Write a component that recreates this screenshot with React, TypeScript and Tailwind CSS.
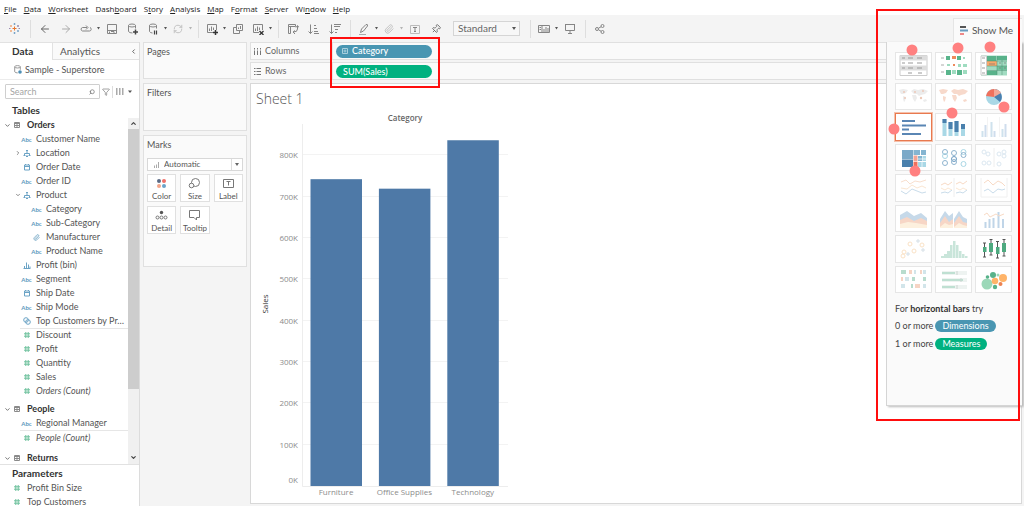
import React from 'react';
import { ArrowLeft, ArrowRight, ChevronDown, ChevronLeft, ChevronRight, ChevronUp, Filter, Paperclip, Pin, RefreshCw, Search } from 'lucide-react';

const menus = [
  ['', 'F', 'ile'],
  ['', 'D', 'ata'],
  ['', 'W', 'orksheet'],
  ['Dash', 'b', 'oard'],
  ['S', 't', 'ory'],
  ['', 'A', 'nalysis'],
  ['', 'M', 'ap'],
  ['F', 'o', 'rmat'],
  ['', 'S', 'erver'],
  ['Wi', 'n', 'dow'],
  ['', 'H', 'elp'],
];

type FieldKind = 'abc' | 'geo' | 'date' | 'clip' | 'bin' | 'set' | 'num';
type Field = { kind: FieldKind; name: string; level?: number; arrow?: 'open' | 'closed'; italic?: boolean };

const orderDims: Field[] = [
  { kind: 'abc', name: 'Customer Name' },
  { kind: 'geo', name: 'Location', arrow: 'closed' },
  { kind: 'date', name: 'Order Date' },
  { kind: 'abc', name: 'Order ID' },
  { kind: 'geo', name: 'Product', arrow: 'open' },
  { kind: 'abc', name: 'Category', level: 1 },
  { kind: 'abc', name: 'Sub-Category', level: 1 },
  { kind: 'clip', name: 'Manufacturer', level: 1 },
  { kind: 'abc', name: 'Product Name', level: 1 },
  { kind: 'bin', name: 'Profit (bin)' },
  { kind: 'abc', name: 'Segment' },
  { kind: 'date', name: 'Ship Date' },
  { kind: 'abc', name: 'Ship Mode' },
  { kind: 'set', name: 'Top Customers by Pr…' },
];

const orderMeasures: Field[] = [
  { kind: 'num', name: 'Discount' },
  { kind: 'num', name: 'Profit' },
  { kind: 'num', name: 'Quantity' },
  { kind: 'num', name: 'Sales' },
  { kind: 'num', name: 'Orders (Count)', italic: true },
];

const sales = [
  { name: 'Furniture', value: 742000 },
  { name: 'Office Supplies', value: 719047 },
  { name: 'Technology', value: 836154 },
];

function FieldIcon({ kind }: { kind: FieldKind }) {
  if (kind === 'abc') return <span className="text-[6px] font-bold text-[#5b98bd]">Abc</span>;
  if (kind === 'clip') return <Paperclip className="w-[7px] h-[7px] text-[#4e8fb5]" />;
  return (
    <svg width="8" height="8" viewBox="0 0 8 8" fill="none" stroke={kind === 'num' ? '#6cc09c' : '#6ba3c5'} strokeWidth="1">
      {kind === 'geo' && <path d="M4 3v2M1.5 6V4.5h5V6M3 1.5h2M3.500 2.500h1M.5 6.5h2M5.5 6.5h2M3.5 6.5h1M3 7.500h2" />}
      {kind === 'date' && <path d="M1.5 2h5v5h-5zM1.5 3.5h5M2.5 1v1M5.5 1v1" />}
      {kind === 'bin' && <path d="M.5 7.5h7M1.5 7V5M3.5 7V1.5M5.5 7V3.5M7 7V5.5" />}
      {kind === 'set' && <><circle cx="3" cy="3" r="2.3" /><circle cx="5" cy="5" r="2.3" /></>}
      {kind === 'num' && <path d="M2.8 1v6M5.2 1v6M1 2.8h6M1 5.2h6" />}
    </svg>
  );
}

function FieldRow({ field }: { field: Field }) {
  return (
    <li className={`flex items-center h-[14px] ${field.level ? 'pl-[25px]' : 'pl-[15px]'}`}>
      <span className="w-[6px] shrink-0 text-[#666]">
        {field.arrow === 'open' && <ChevronDown className="w-[6px] h-[6px]" strokeWidth={3} />}
        {field.arrow === 'closed' && <ChevronRight className="w-[6px] h-[6px]" strokeWidth={3} />}
      </span>
      <span className="w-[11px] shrink-0 flex items-center justify-center"><FieldIcon kind={field.kind} /></span>
      <button className={`ml-1 whitespace-nowrap ${field.italic ? 'italic' : ''}`}>{field.name}</button>
    </li>
  );
}

function TableHeading({ name }: { name: string }) {
  return (
    <h3 className="flex items-center h-[14px] pl-1 font-bold text-[#333]">
      <ChevronDown className="w-[7px] h-[7px] text-[#666]" strokeWidth={3} />
      <svg className="ml-[3px] mr-[7px]" width="6" height="6" viewBox="0 0 6 6" fill="none" stroke="#8a8a8a">
        <path d="M.5 .5h5v5h-5zM0 1.5h6M0 3.5h6M3 1v5" />
      </svg>
      {name}
    </h3>
  );
}

function Sidebar() {
  return (
    <aside className="w-[140px] shrink-0 flex flex-col bg-white border-r border-[#dcdcdc] overflow-hidden text-[9px] text-[#555]">
      <div className="flex h-[18px] text-[10px] shrink-0">
        <button className="w-[52px] border-t border-[#e2e2e2] pl-3 pr-5 text-left font-bold text-[#333]">Data</button>
        <div className="flex-1 flex items-center justify-between bg-[#fafafa] border border-r-0 border-[#e2e2e2] pl-[7px] pr-[2px] text-[#555]">
          <button>Analytics</button>
          <button aria-label="Collapse pane"><ChevronLeft className="w-[7px] h-[7px]" strokeWidth={3} /></button>
        </div>
      </div>
      <div className="flex items-center h-5 shrink-0 pl-[14px] gap-[3px] border-b border-[#ececec]">
        <svg width="8" height="9" viewBox="0 0 8 9" fill="none" stroke="#999">
          <ellipse cx="3.5" cy="1.8" rx="2.8" ry="1.2" /><path d="M.7 1.8v5q1 1.2 3 1.1M6.3 1.8v3" />
          <circle cx="6" cy="7" r="1.8" fill="#4e8fb5" stroke="none" />
        </svg>
        Sample - Superstore
      </div>
      <div className="flex items-center shrink-0 h-[23px] pl-[5px]">
        <div className="flex items-center w-[95px] h-[15px] border border-[#cfcfcf] rounded-[1px] px-1">
          <input aria-label="Search" placeholder="Search" className="min-w-0 flex-1 outline-none placeholder:text-[#a5a5a5]" />
          <Search className="w-[6px] h-[6px] -scale-x-100 text-[#777]" strokeWidth={3} />
        </div>
        <Filter className="w-[8px] h-[8px] ml-[2px] text-[#777]" />
        <span className="w-px h-3 ml-[2px] bg-[#ddd]" />
        <svg className="ml-[3px]" width="8" height="7" viewBox="0 0 8 7" fill="#aaa"><path d="M0 0h1.5v7H0zM3 0h1.5v7H3zM6 0h1.5v7H6z" /></svg>
        <svg className="ml-1" width="4" height="3" viewBox="0 0 4 3" fill="#555"><path d="M0 .5h4L2 3z" /></svg>
      </div>
      <h2 className="h-[15px] shrink-0 pl-3 text-[10px] leading-[15px] font-bold text-[#333]">Tables</h2>
      <div className="flex flex-1 min-h-0">
        <div className="flex-1 overflow-hidden">
          <TableHeading name="Orders" />
          <ul>{orderDims.map((f) => <FieldRow key={f.name} field={f} />)}</ul>
          <ul className="relative before:absolute before:left-5 before:right-0 before:top-0 before:h-px before:bg-[#e6e6e6]">
            {orderMeasures.map((f) => <FieldRow key={f.name} field={f} />)}
          </ul>
          <div className="mt-1"><TableHeading name="People" /></div>
          <ul><FieldRow field={{ kind: 'abc', name: 'Regional Manager' }} /></ul>
          <div className="ml-5 border-t border-[#e6e6e6]" />
          <ul><FieldRow field={{ kind: 'num', name: 'People (Count)', italic: true }} /></ul>
          <div className="mt-[6px]"><TableHeading name="Returns" /></div>
        </div>
        <div className="w-[11px] flex flex-col bg-[#f0f0f0] text-[#444]">
          <button aria-label="Scroll up" className="h-[11px] flex items-center justify-center"><ChevronUp className="w-[7px] h-[7px]" strokeWidth={4} /></button>
          <div className="h-3/4 bg-[#cdcdcd]" />
          <button aria-label="Scroll down" className="mt-auto h-[13px] flex items-center justify-center"><ChevronDown className="w-[7px] h-[7px]" strokeWidth={4} /></button>
        </div>
      </div>
      <div className="h-[42px] shrink-0 border-t border-[#e2e2e2]">
        <h2 className="h-4 pl-3 text-[10px] leading-4 font-bold text-[#333]">Parameters</h2>
        {['Profit Bin Size', 'Top Customers'].map((p) => (
          <div key={p} className="flex items-center h-[14px] pl-[13px] gap-[6px]">
            <FieldIcon kind="num" />
            <button>{p}</button>
          </div>
        ))}
      </div>
    </aside>
  );
}

function Tool({ label, caret, dim, children }: { label: string; caret?: boolean; dim?: boolean; children: React.ReactNode }) {
  return (
    <div className={`flex items-center ${dim ? 'opacity-40' : ''}`}>
      <button aria-label={label} className={`flex items-center justify-center h-5 ${caret ? 'w-5' : 'w-[21px]'}`}>{children}</button>
      {caret && (
        <svg width="5" height="3" viewBox="0 0 5 3" fill="#555"><path d="M1 0h3L2.5 2.5z" /></svg>
      )}
    </div>
  );
}

function Glyph({ children }: { children: React.ReactNode }) {
  return <svg width="12" height="12" viewBox="0 0 12 12" fill="none" stroke="#858585">{children}</svg>;
}

const Divider = () => <span className="w-px h-[18px] ml-[5px] mr-[3px] bg-[#dedede]" />;

function Toolbar() {
  return (
    <div className="flex items-center h-[27px] shrink-0 pl-1 text-[#666]">
      <Tool label="Start page">
        <svg width="11" height="11" viewBox="0 0 11 11" fill="none">
          <path stroke="#e8762d" d="M5.5 3.5v4M3.5 5.5h4" />
          <path stroke="#7ba5c8" d="M5.5 0v2M4.5 1h2M5.5 9v2M4.5 10h2M8 8h2M9 7v2" />
          <path stroke="#f0a878" d="M1 3h2M2 2v2M1 8h2M2 7v2" />
          <path stroke="#9a8ab0" d="M8 3h2M9 2v2M0 5.5h1.5M9.5 5.5H11" />
        </svg>
      </Tool>
      <Divider />
      <Tool label="Undo"><ArrowLeft className="w-3 h-3" strokeWidth={2} /></Tool>
      <Tool label="Redo"><ArrowRight className="w-3 h-3 text-[#aaa]" strokeWidth={2} /></Tool>
      <Tool label="Replay" caret><Glyph><path d="M7 4.5H2.5a1.8 1.8 0 0 0 0 3.5h7a1.8 1.8 0 0 0 .5-3.5M6 2.5l2 2-2 2" /></Glyph></Tool>
      <Tool label="Save"><Glyph><path d="M1.5 1.5h9v9h-9zM3.5 8.5v2M5 8.500h3v2M2 7.5h8" /></Glyph></Tool>
      <Tool label="New data source"><Glyph><ellipse cx="5" cy="2.5" rx="3.5" ry="1.5" /><path d="M1.500 2.500v6q1 1.500 4 1.500M8.500 2.500v3" /><path stroke="#444" strokeWidth="1.500" d="M8.500 6.500v5M6 9h5" /></Glyph></Tool>
      <Tool label="Pause updates" caret><Glyph><ellipse cx="6" cy="2.5" rx="3.500" ry="1.500" /><path d="M2.500 2.500v6q1 1.500 3 1.500M9.500 2.500v3" /><path stroke="#444" strokeWidth="1.200" d="M7.500 7.500v4M9.500 7.500v4" /></Glyph></Tool>
      <Tool label="Refresh" caret dim><RefreshCw className="w-[10px] h-[10px]" /></Tool>
      <Divider />
      <Tool label="New worksheet" caret><Glyph><path d="M7 9.500H1.500v-8h9V7M3.500 8V5.500M5.500 8V3.500M7.500 7V4.500" /><path stroke="#333" strokeWidth="1.500" d="M9.500 7v5M7 9.500h5" /></Glyph></Tool>
      <Tool label="Duplicate"><Glyph><path d="M4.500 1.500h6v6h-6zM4.500 4.500h-3v6h6v-3M6.500 6V4.500M8.500 6V3" /></Glyph></Tool>
      <Tool label="Clear sheet" caret><Glyph><path d="M7 9.500H1.500v-8h9V7M3.500 8V5.500M5.500 8V3.500M7.500 7V4.500" /><path stroke="#333" strokeWidth="1.300" d="M7.500 8l4 4M11.500 8l-4 4" /></Glyph></Tool>
      <Divider />
      <Tool label="Swap rows and columns"><Glyph><path d="M1.500 1.500h7v2h-7zM1.500 3.500h2v7h-2zM10.500 3v3q0 3-4 3M9 4.500l1.500-2L12 4.500M8 7.500L6 9l2 2" /></Glyph></Tool>
      <Tool label="Sort ascending"><Glyph><path d="M2.500 1.500v9M.5 8.500l2 2 2-2M6 2.500h2M6 5.500h3M6 8.500h4M6 10.500h5" /></Glyph></Tool>
      <Tool label="Sort descending"><Glyph><path d="M2.500 1.500v9M.5 8.500l2 2 2-2M5 1.500h7M5 3.500h6M6 6.500h3M6 9.500h2" /></Glyph></Tool>
      <Divider />
      <Tool label="Highlight" caret><Glyph><path d="M1 11.500h7" stroke="#aaa" /><path d="M2.500 9.500l1-3.500 4.500-4.500q2-.5 1.500 1.500L5.500 8z" /></Glyph></Tool>
      <Tool label="Group members" caret dim><Paperclip className="w-[10px] h-[10px]" /></Tool>
      <Tool label="Show mark labels"><Glyph><path stroke="#bbb" d="M1.500 2.500h9v8h-9z" /><path d="M4 4.500h4M6 4.500v4M5 8.500h2" /></Glyph></Tool>
      <Tool label="Fix axes"><Pin className="w-[10px] h-[10px] rotate-45" /></Tool>
      <div className="relative ml-[7px] w-[67px] h-[15px] shrink-0">
        <select aria-label="Fit" className="block appearance-none w-full h-full border border-[#d5d5d5] bg-[#f7f7f7] pl-1 text-[10px] leading-[13px] text-[#666]">
          <option>Standard</option>
        </select>
        <svg className="absolute right-1 top-1.5 pointer-events-none" width="4" height="3" viewBox="0 0 4 3" fill="#555"><path d="M0 0h4L2 3z" /></svg>
      </div>
      <span className="w-[5px]" />
      <Divider />
      <Tool label="Show cards" caret><Glyph><path d="M.5 2.500h11v7H.5zM4 2.500v7M1.500 4.500h1.500M1.500 6.500h1.500M6 9V6M8 9V4M10 9V5" /></Glyph></Tool>
      <Tool label="Presentation mode"><Glyph><path d="M1 1.500h10M1.500 2v5.500h9V2M6 7.500v2.500M4 10.500h4" /></Glyph></Tool>
      <Divider />
      <Tool label="Share"><Glyph><circle cx="3" cy="6" r="1.500" /><circle cx="8.500" cy="3" r="1.500" /><circle cx="8.500" cy="9" r="1.500" /><path d="M4.500 5.200L7 3.800M4.500 6.800L7 8.200" /></Glyph></Tool>
    </div>
  );
}

const marks = [
  { name: 'Color', icon: <><circle cx="4" cy="4" r="2" fill="#5b6b86" /><circle cx="9" cy="4" r="2" fill="#f07068" /><circle cx="4" cy="9" r="2" fill="#f4a58a" /><circle cx="9" cy="9" r="2" fill="#6ba3c8" /></> },
  { name: 'Size', icon: <g fill="none" stroke="#777"><circle cx="7.500" cy="5.500" r="4" /><circle cx="3.500" cy="8.500" r="2.300" fill="#fafafa" /></g> },
  { name: 'Label', icon: <path fill="none" stroke="#777" d="M1.500 2.500h10v8h-10zM4.500 4.500h4M6.500 4.500v4" /> },
  { name: 'Detail', icon: <><circle cx="6.500" cy="3.500" r="1.700" fill="#555" /><g fill="none" stroke="#777"><circle cx="2.500" cy="8.500" r="1.500" /><circle cx="6.500" cy="8.500" r="1.500" /><circle cx="10.500" cy="8.500" r="1.500" /></g></> },
  { name: 'Tooltip', icon: <path fill="none" stroke="#777" d="M1.500 1.500h10v7h-3v2.500l-2.500-2.500h-4.500z" /> },
];

function Cards() {
  return (
    <div className="w-[110px] shrink-0 flex flex-col gap-1 pl-[3px] pr-[3px] text-[9px] text-[#555]">
      <section className="h-[37px] shrink-0 border border-[#e0e0e0] bg-[#fafafa] px-[3px] pt-[3px]"><h2 className="leading-3">Pages</h2></section>
      <section className="h-12 shrink-0 border border-[#e0e0e0] bg-[#fafafa] px-[3px] pt-[3px]"><h2 className="leading-3">Filters</h2></section>
      <section className="h-[132px] shrink-0 border border-[#e0e0e0] bg-[#fafafa] px-[3px] pt-[3px]">
        <h2 className="leading-3">Marks</h2>
        <div className="relative mt-[7px] h-[13px]">
          <select aria-label="Mark type" className="block appearance-none w-full h-full border border-[#d8d8d8] bg-white pl-4 text-[8px] leading-[11px]">
            <option>Automatic</option>
          </select>
          <svg className="absolute left-[7px] top-1 pointer-events-none" width="6" height="6" viewBox="0 0 6 6" stroke="#aaa"><path d="M.5 6V3.500M2.500 6V2.500M4.500 6V0" /></svg>
          <span className="absolute right-[11px] top-px bottom-px w-px bg-[#ddd]" />
          <svg className="absolute right-1 top-[5px] pointer-events-none" width="4" height="3" viewBox="0 0 4 3" fill="#666"><path d="M0 0h4L2 3z" /></svg>
        </div>
        <div className="grid grid-cols-3 gap-1 mt-[3px]">
          {marks.map((m) => (
            <button key={m.name} className="h-7 flex flex-col items-center justify-between border border-[#e0e0e0] bg-white pt-[2px] text-[8px] leading-[10px]">
              <svg width="13" height="13" viewBox="0 0 13 13">{m.icon}</svg>
              {m.name}
            </button>
          ))}
        </div>
      </section>
    </div>
  );
}

function Shelf({ name, rows, children }: { name: string; rows?: boolean; children: React.ReactNode }) {
  return (
    <div className="flex items-center h-[18px] border border-[#e0e0e0] bg-[#fafafa]">
      <div className="flex items-center gap-1 w-[81px] pl-[3px] text-[9px] text-[#666]">
        <svg width="7" height="7" viewBox="0 0 7 7" stroke="#777">
          {rows ? <path d="M0 .5h1.500M2.500 .5H7M0 3.500h1.500M2.500 3.500H7M0 6.500h1.500M2.500 6.500H7" /> : <path d="M.5 0v1.500M.5 2.500V7M3.500 0v1.500M3.500 2.500V7M6.500 0v1.500M6.500 2.500V7" />}
        </svg>
        {name}
      </div>
      <div className="flex-1 h-full flex items-center border-l border-[#e6e6e6] pl-[3px]">{children}</div>
    </div>
  );
}

function Chart() {
  const zero = 378;
  const y = (v: number) => zero - v * 0.0004135;
  const ticks = [0, 1, 2, 3, 4, 5, 6, 7, 8];
  return (
    <svg width="270" height="394" viewBox="0 0 270 394" className="block" role="img" aria-label="Sales by category" fontFamily='"Open Sans", sans-serif' fontSize="8" fill="#8c8c8c">
      <text x="154" y="13" textAnchor="middle" fontWeight="600" fill="#666">Category</text>
      <text transform="translate(17 196) rotate(-90)" textAnchor="middle" fill="#333">Sales</text>
      <path d="M51.500 16V378.500H257" fill="none" stroke="#ededed" />
      {ticks.map((t) => (
        <g key={t}>
          {t > 0 && <line x1="52" x2="257" y1={Math.round(y(t * 100000)) - 0.5} y2={Math.round(y(t * 100000)) - 0.5} stroke="#f3f3f3" />}
          <text x="47" y={t ? y(t * 100000) + 3 : zero - 3} textAnchor="end">{t ? `${t}00K` : '0K'}</text>
        </g>
      ))}
      {sales.map((s, i) => (
        <g key={s.name}>
          <rect x={59.5 + i * 68.4} y={y(s.value)} width="51.500" height={zero - y(s.value)} fill="#4e79a7" />
          <text x={85 + i * 68.4} y="387" textAnchor="middle">{s.name}</text>
        </g>
      ))}
    </svg>
  );
}

const worldMap = 'M4 7l4-1 5 1-2 3-3 1-2 0zM8 13l3 1-1 4-1 1-1-3zM16 8l3-2 4 1 5-1 5 2-3 3-4 1-2 1-2-2-3 0zM17 12l4 0 1 3-2 4-2-3zM28 17l3-1 1 2-3 1z';

// 3 columns by 8 rows, each drawn on a 37x27 tile
const thumbs: { name: string; art: React.ReactNode }[] = [
  { name: 'Text table', art: <><path d="M5 3.500h27v20H5z" fill="#fff" stroke="#ccc" /><path d="M5 3.500h27v5H5zM5 13.500h27v5H5z" fill="#ddd" /><path d="M7 6h3M13 6h5M22 6h5M7 11h3M13 11h5M22 11h5M7 16h3M13 16h5M22 16h5M13 21h4M23 21h4" stroke="#999" /></> },
  { name: 'Heat map', art: <><path d="M6 6h3M6 13h3M6 20h3" stroke="#aaa" /><path fill="#59b58c" d="M11 4h4v4h-4zM22 4h4v4h-4zM11 18h5v5h-5zM22 18h5v5h-5z" /><path fill="#9fdcc0" d="M17 18h4v4h-4zM28 5h2v2h-2zM12 12h3v2h-3zM23 12h3v3h-3zM28 12h4v3h-4zM28 18h4v4h-4z" /><path fill="#ee8a5c" d="M17 4h4v3h-4zM18 12h2v2h-2z" /></> },
  { name: 'Highlight table', art: <><path d="M6 3.500h26v20H6z" fill="#a2dcc2" /><path d="M12 4h9v5h-9zM22 4h10v4H22zM12 19h10v4H12z" fill="#58b28a" /><path d="M22 14h10v4H22z" fill="#70c39e" /><path d="M12 9h10v5H12z" fill="#f9a86a" /><path d="M6 4h5.500v19H6z" fill="#fff" stroke="#ccc" /><path d="M12 9h20M12 14h20M12 18.500h20M22 4v19M27 8v15" stroke="#4c8f73" strokeWidth=".5" /><path d="M7 6h3M7 11h3M7 16h3M7 21h3M14 12h6M24 11h2M29 11h2M24 16h2M29 16h2" stroke="#777" strokeWidth=".7" /></> },
  { name: 'Symbol map', art: <><path d={worldMap} fill="#ececec" /><g fill="#edc9b8"><circle cx="9" cy="9" r="1" /><circle cx="10" cy="15" r="1" /><circle cx="20" cy="9" r="1" /><circle cx="26" cy="15" r="1.200" /><circle cx="28" cy="8" r="1" /></g></> },
  { name: 'Filled map', art: <path d={worldMap} fill="#f7d9cb" /> },
  { name: 'Pie chart', art: <><circle cx="19" cy="14" r="8" fill="#a9d8e6" /><path d="M19 14V6a8 8 0 0 1 6 13z" fill="#4a80b0" /><path d="M19 14l-8-1a8 8 0 0 1 8-7z" fill="#f0705c" /><path d="M19 14V6a8 8 0 0 1 7 4z" fill="#f3a797" /></> },
  { name: 'Horizontal bars', art: <path d="M7 8h13M7 12.500h24M7 16.500h7M7 21h19" stroke="#5a86b4" strokeWidth="2.200" /> },
  { name: 'Stacked bars', art: <><path d="M9.500 6v17M15.500 9v14M21.500 8v15M28 11v12" stroke="#a9d8e6" strokeWidth="4" /><path d="M9.500 6v4M15.500 9v7M21.500 8v11M28 11v5" stroke="#4a80ad" strokeWidth="4" /></> },
  { name: 'Side-by-side bars', art: <><path d="M12.500 4v20M24.500 4v20" stroke="#eee" strokeWidth=".7" /><path d="M7.500 24v-6M16.500 24V9M27.500 24V16" stroke="#cfe2ed" strokeWidth="2" /><path d="M10.500 24V12M19.500 24v-6M30.500 24V11" stroke="#cfdded" strokeWidth="2" /></> },
  { name: 'Treemap', art: <><path d="M7 6h11v9H7z" fill="#7ba9c8" /><path d="M7 15.500h11V23H7z" fill="#4a80ad" /><path d="M18.500 6H25v5h-6.500zM26 6h5v5h-5zM23 12h4v5h-4z" fill="#85b5d1" /><path d="M18.500 11.500h4v6h-4z" fill="#f4a595" /><path d="M18.500 18h4v5h-4z" fill="#f0705c" /><path d="M27.500 12H31v5h-3.500zM23 18h8v5h-8z" fill="#a9d8e6" /><path d="M27 17.500v6M23 15h8" stroke="#fff" strokeWidth=".7" /></> },
  { name: 'Circle views', art: <g fill="none" stroke="#8fb4cf"><circle cx="10" cy="8" r="2.500" /><circle cx="10" cy="12" r="2.500" stroke="#aad7e5" /><circle cx="10" cy="19" r="2.500" /><circle cx="19" cy="9" r="2.500" /><circle cx="19" cy="15" r="2.500" stroke="#6c9bc2" /><circle cx="19" cy="18" r="2.500" /><circle cx="28.500" cy="8" r="2.500" stroke="#aad7e5" /><circle cx="28.500" cy="11" r="2.500" /><circle cx="28.500" cy="20" r="2.500" stroke="#aad7e5" /></g> },
  { name: 'Side-by-side circles', art: <g fill="none" stroke="#dce8f1"><path d="M19 4v19" stroke="#eee" /><circle cx="9" cy="8" r="2" /><circle cx="13" cy="10" r="2" /><circle cx="9" cy="19" r="2" /><circle cx="14" cy="19" r="2" /><circle cx="24" cy="10" r="2" /><circle cx="29" cy="8" r="2" /><circle cx="29" cy="12" r="2" /><circle cx="24" cy="20" r="2" /></g> },
  { name: 'Continuous lines', art: <g fill="none"><path d="M6 8l5-2 4 4 5-3 5 1 6-2" stroke="#f8dfce" /><path d="M6 14l6 1 5-4 5 3 5-2 4 2" stroke="#fae6d2" /><path d="M6 17l5 3 6-5 5 2 5 2 4-1" stroke="#c9dcea" /></g> },
  { name: 'Discrete lines', art: <g fill="none"><path d="M19 4v19" stroke="#eee" /><path d="M6 11l4-2 3 2 4-3M21 10l4-2 3 2 4-3" stroke="#f8dac5" /><path d="M6 14l4 2 3-2 4 2M21 14l4 2 3-2 4 2" stroke="#fbe7d3" /><path d="M6 19l4-1 3 1 4-3M21 19l4-1 3 1 4-3" stroke="#c9dcea" /></g> },
  { name: 'Dual lines', art: <g fill="none"><path d="M6 4v19h26V4" stroke="#f0f0f0" /><path d="M9 9l4-3 5 5 5-4 4 2 3 3" stroke="#f8dac5" /><path d="M9 17l4-2 5 4 5-4 4 1 3-1" stroke="#c9dcea" /></g> },
  { name: 'Area charts (continuous)', art: <><path d="M5 10l7-4 7 5 7-3 6 5v10H5z" fill="#c6d9e9" /><path d="M5 15l7-3 7 4 7-3 6 3v7H5z" fill="#f7d6c6" /><path d="M5 19l8-2 8 1 11 2v3H5z" fill="#fdf0de" /></> },
  { name: 'Area charts (discrete)', art: <><path d="M5 14l5-8 4 5 4-3v15H5zM19 14l5-8 4 6 4 2v9H19z" fill="#c6d9e9" /><path d="M5 18l5-7 4 6 4-3v9H5zM19 18l5-7 4 6 4 1v5H19z" fill="#f7d6c6" /><path d="M5 22l5-4 4 2 4-1v4H5zM19 22l5-4 4 2 4 1v2H19z" fill="#fdf0de" /></> },
  { name: 'Dual combination', art: <><path d="M10.500 23v-6M14.500 23v-9M18.500 23V13M23.500 23V7M28 23v-9" stroke="#c0d5e8" strokeWidth="2" /><path d="M9 10l3-2 3 4 6-3 3 2 5-2" fill="none" stroke="#f8dac5" /></> },
  { name: 'Scatter plots', art: <g fill="none" stroke="#fae2c6"><circle cx="15" cy="9" r="2" /><circle cx="9" cy="17" r="2" /><circle cx="8" cy="21" r="2" /><circle cx="19" cy="16" r="2" /><circle cx="27" cy="10" r="2" /><path d="M23 4v4M21 6h4M13 17v4M11 19h4M28 13v4M26 15h4" stroke="#d5dfe6" /></g> },
  { name: 'Histogram', art: <path d="M6 23v-2h3v2zM9 23v-4h3v4zM12 23v-7h3v7zM15 23V10h2.500v13zM18 23V6h2.500v17zM21 23V10h2.500v13zM24 23v-7h2.500v7zM27 23v-4h2.500v4zM30 23v-2h2.500v2z" fill="#c9e5da" /> },
  { name: 'Box-and-whisker plot', art: <><path d="M9.500 8v14M16 4v16M22.500 6v17M29 4v17M8 8h3M8 22h3M14.500 4.500h3M14.500 20h3M21 6.500h3M21 23h3M27.500 4.500h3M27.500 21h3" stroke="#555" /><path d="M8 12h3.500v5H8zM14 8h4v9h-4zM21 12h3.500v7H21zM27 8h4v9h-4z" fill="#4eaa80" /></> },
  { name: 'Gantt chart', art: <><path d="M6 6h5M17 13h3M28 13h3M16 20h2" stroke="#b8dccd" strokeWidth="4" /><path d="M14 6h3M25 6h2M6 13h2M20 20h5" stroke="#f6d4c4" strokeWidth="4" /><path d="M19 6h2M28 6h3M10 13h4M6 20h4M28 20h3" stroke="#d2e5ea" strokeWidth="4" /></> },
  { name: 'Bullet graph', art: <><path d="M7 7h25M7 14h25M7 21h25" stroke="#eef3f1" strokeWidth="4" /><path d="M7 7h13M7 14h21M7 21h13" stroke="#bfe0d2" strokeWidth="2" /><path d="M22 5v4M26 12v4M22 19v4" stroke="#ccd5d1" /></> },
  { name: 'Packed bubbles', art: <><circle cx="12" cy="18" r="5.500" fill="#9bd8b8" /><circle cx="18" cy="9" r="3" fill="#58b28a" /><circle cx="12.500" cy="11" r="1.800" fill="#58b28a" /><circle cx="28" cy="12" r="4" fill="#ffb469" /><circle cx="20" cy="15" r="3.300" fill="#ffb469" /><circle cx="25.500" cy="18" r="2" fill="#ed8352" /><circle cx="20" cy="21" r="2.200" fill="#58b28a" /><circle cx="23" cy="9" r="1.500" fill="#9bd8b8" /></> },
];

const dots = [[26, 32], [72, 30], [104, 29], [118, 89], [66, 95], [8, 111], [29, 153]];

function ShowMe() {
  return (
    <div className="absolute right-[2px] top-[18px] w-[136px] text-[9px] text-[#444]">
      <button className="relative z-10 ml-auto flex items-center gap-1 h-6 w-[69px] pl-[6px] bg-[#fafafa] border-l border-t border-[#e5e5e5] text-[10px] text-[#555] whitespace-nowrap">
        <svg width="8" height="9" viewBox="0 0 8 9"><path d="M0 1h6" stroke="#555" strokeWidth="2" /><path d="M0 4.500h8" stroke="#6b9dc0" strokeWidth="2" /><path d="M0 8h4" stroke="#e88" strokeWidth="2" /></svg>
        Show Me
      </button>
      <div className="h-[364px] bg-[#fafafa] border-l border-b border-[#d5d5d5] shadow-[2px_1px_2px_#bbb] pl-2 pt-[10px]">
        <div className="grid grid-cols-3 gap-[3px] w-[117px] h-[241px]">
          {thumbs.map((t) => (
            <button key={t.name} aria-label={t.name} className={`bg-white border overflow-hidden flex items-center justify-center ${t.name === 'Horizontal bars' ? 'border-[#e8794f] outline outline-[#f5c0aa]' : 'border-[#e6e6e6]'}`}>
              <svg width="37" height="27" viewBox="0 0 37 27" className="shrink-0">{t.art}</svg>
            </button>
          ))}
        </div>
        <p className="mt-[10px] leading-3">For <b className="text-[#333]">horizontal bars</b> try</p>
        <p className="flex items-center gap-[2px] mt-1 h-[13px]">0 or more <span className="h-3 rounded-full bg-[#4996b2] px-[7px] leading-3 text-white">Dimensions</span></p>
        <p className="flex items-center gap-[2px] mt-[5px] h-[13px]">1 or more <span className="h-3 rounded-full bg-[#00b180] px-[7px] leading-3 text-white">Measures</span></p>
      </div>
      <svg className="absolute inset-0 z-10 pointer-events-none overflow-visible" width="136" height="388" fill="#ff8080">
        {dots.map(([cx, cy]) => <circle key={`${cx}-${cy}`} cx={cx} cy={cy} r="5.500" />)}
      </svg>
      <div className="absolute z-20 -left-[10px] -top-[9px] right-[2px] -bottom-[15px] border-2 border-[#ff0d0d] pointer-events-none" />
    </div>
  );
}

export default function App() {
  return (
    <div className="relative h-screen flex flex-col overflow-hidden bg-[#f4f4f4] font-['Lato',sans-serif]">
      <nav className="flex items-center gap-[7px] h-[15px] shrink-0 bg-white pl-1 pt-[3px] text-[8px] text-[#222] font-['Open_Sans',sans-serif]">
        {menus.map(([pre, key, post]) => (
          <button key={pre + key + post} className="leading-3">{pre}<u>{key}</u>{post}</button>
        ))}
      </nav>
      <Toolbar />
      <div className="flex flex-1 min-h-0">
        <Sidebar />
        <Cards />
        <main className="flex-1 min-w-0 flex flex-col pr-[2px] pb-[2px]">
          <div className="relative flex flex-col gap-[2px]">
            <Shelf name="Columns">
              <button className="flex items-center gap-1 w-24 h-[13px] rounded-full bg-[#4996b2] pl-[6px] text-[9px] font-medium text-white">
                <svg width="6" height="6" viewBox="0 0 6 6" fill="none" stroke="#a9cfdd"><path d="M.5 .5h5v5h-5zM1.500 3h3M3 1.500v3" /></svg>
                Category
              </button>
            </Shelf>
            <Shelf name="Rows" rows>
              <button className="w-24 h-[13px] rounded-full bg-[#00b180] pl-[7px] text-left text-[9px] leading-[13px] font-medium text-white">SUM(Sales)</button>
            </Shelf>
            <div className="absolute left-[80px] -top-[5px] w-[110px] h-[51px] border-2 border-[#ff0d0d] pointer-events-none" />
          </div>
          <section className="mt-[3px] flex-1 min-h-0 bg-white border border-[#d8d8d8] overflow-hidden">
            <h1 className="h-6 pl-[5px] pt-[3px] text-[14px] leading-6 font-light text-[#555] font-['Open_Sans',sans-serif]">Sheet 1</h1>
            <Chart />
          </section>
        </main>
      </div>
      <ShowMe />
    </div>
  );
}
